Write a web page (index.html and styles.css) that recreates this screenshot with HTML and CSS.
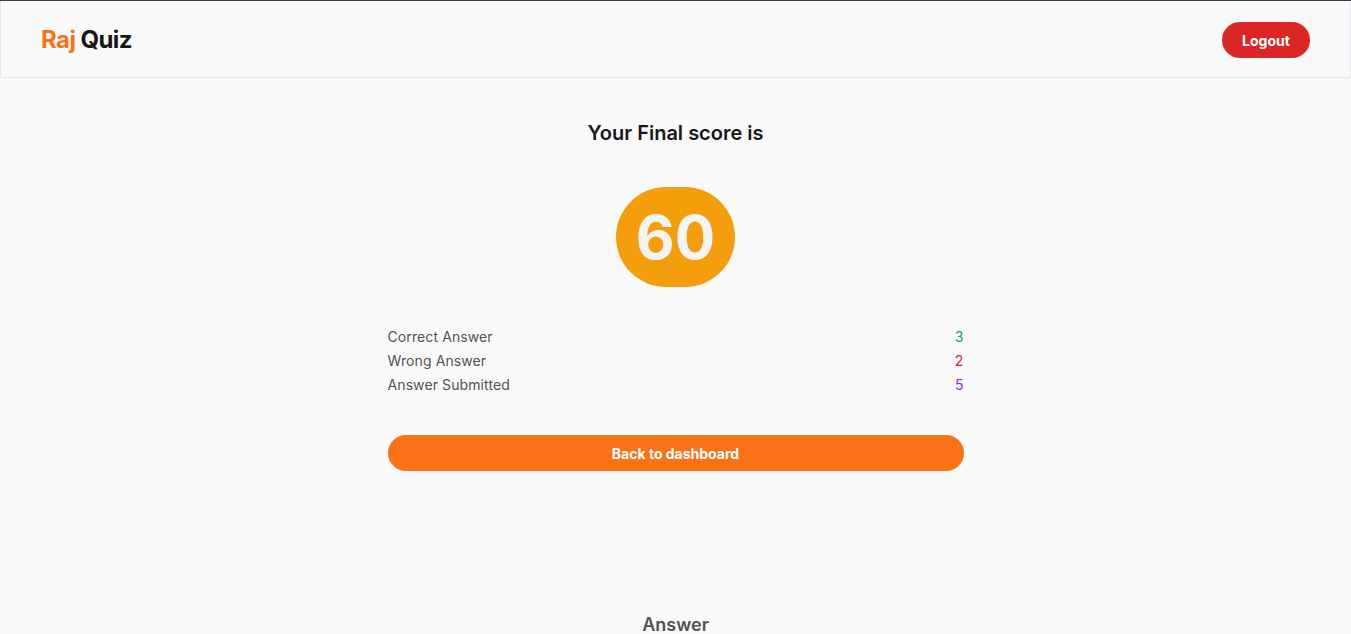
FILE: index.html
```html
<!DOCTYPE html>
<html>
<head>
<meta charset="utf-8">
<link rel="stylesheet" href="styles.css">
</head>
<body>
<div class="topline"></div>
<header class="header">
  <div class="logo"><span class="raj">Raj</span> <span class="quiz">Quiz</span></div>
  <button class="logout">Logout</button>
</header>
<main class="main">
  <h1 class="title">Your Final score is</h1>
  <div class="score">60</div>
  <div class="stats">
    <div class="row"><span>Correct Answer</span><span class="green">3</span></div>
    <div class="row"><span>Wrong Answer</span><span class="red">2</span></div>
    <div class="row"><span>Answer Submitted</span><span class="purple">5</span></div>
  </div>
  <button class="back">Back to dashboard</button>
  <h2 class="answer">Answer</h2>
</main>
</body>
</html>
```
FILE: styles.css
```css
* { box-sizing: border-box; }
html, body { margin: 0; padding: 0; }
body {
  background: #fafafa;
  font-family: Inter, "Noto Sans", sans-serif;
  color: #171717;
  overflow: hidden;
}
.topline { height: 1px; background: #453c36; }
.header {
  height: 77px;
  border: 1px solid #e2e8f0;
  border-top: none;
  display: flex;
  align-items: center;
  justify-content: space-between;
  padding: 0 40px;
}
.logo { font-size: 24px; font-weight: 700; letter-spacing: -0.6px; }
.raj { color: #f97316; }
.quiz { color: #171717; }
.logout {
  margin-top: 2px;
  background: #dc2626;
  color: #fff;
  border: none;
  border-radius: 9999px;
  height: 36px;
  width: 88px;
  font-family: Inter, sans-serif;
  font-weight: 700;
  font-size: 14px;
}
.main {
  display: flex;
  flex-direction: column;
  align-items: center;
}
.title {
  margin: 41px 0 0;
  font-size: 20px;
  line-height: 28px;
  font-weight: 600;
  color: #171717;
}
.score {
  margin-top: 40px;
  width: 119px;
  height: 100px;
  border-radius: 50px;
  background: #f59e0b;
  color: #f3f4f6;
  font-size: 60px;
  font-weight: 700;
  display: flex;
  align-items: center;
  justify-content: center;
}
.stats {
  margin-top: 40px;
  width: 576px;
  display: flex;
  flex-direction: column;
  gap: 4px;
  font-size: 14px;
  line-height: 20px;
  color: #525252;
  letter-spacing: 0.1px;
}
.row { display: flex; justify-content: space-between; }
.green { color: #16a34a; }
.red { color: #dc2626; }
.purple { color: #9333ea; }
.back {
  margin-top: 40px;
  width: 576px;
  height: 36px;
  border: none;
  border-radius: 9999px;
  background: #f97316;
  color: #fff;
  font-family: Inter, sans-serif;
  font-weight: 700;
  font-size: 14px;
}
.answer {
  margin: 140px 0 0;
  font-size: 18px;
  line-height: 28px;
  font-weight: 600;
  color: #525252;
}
```
